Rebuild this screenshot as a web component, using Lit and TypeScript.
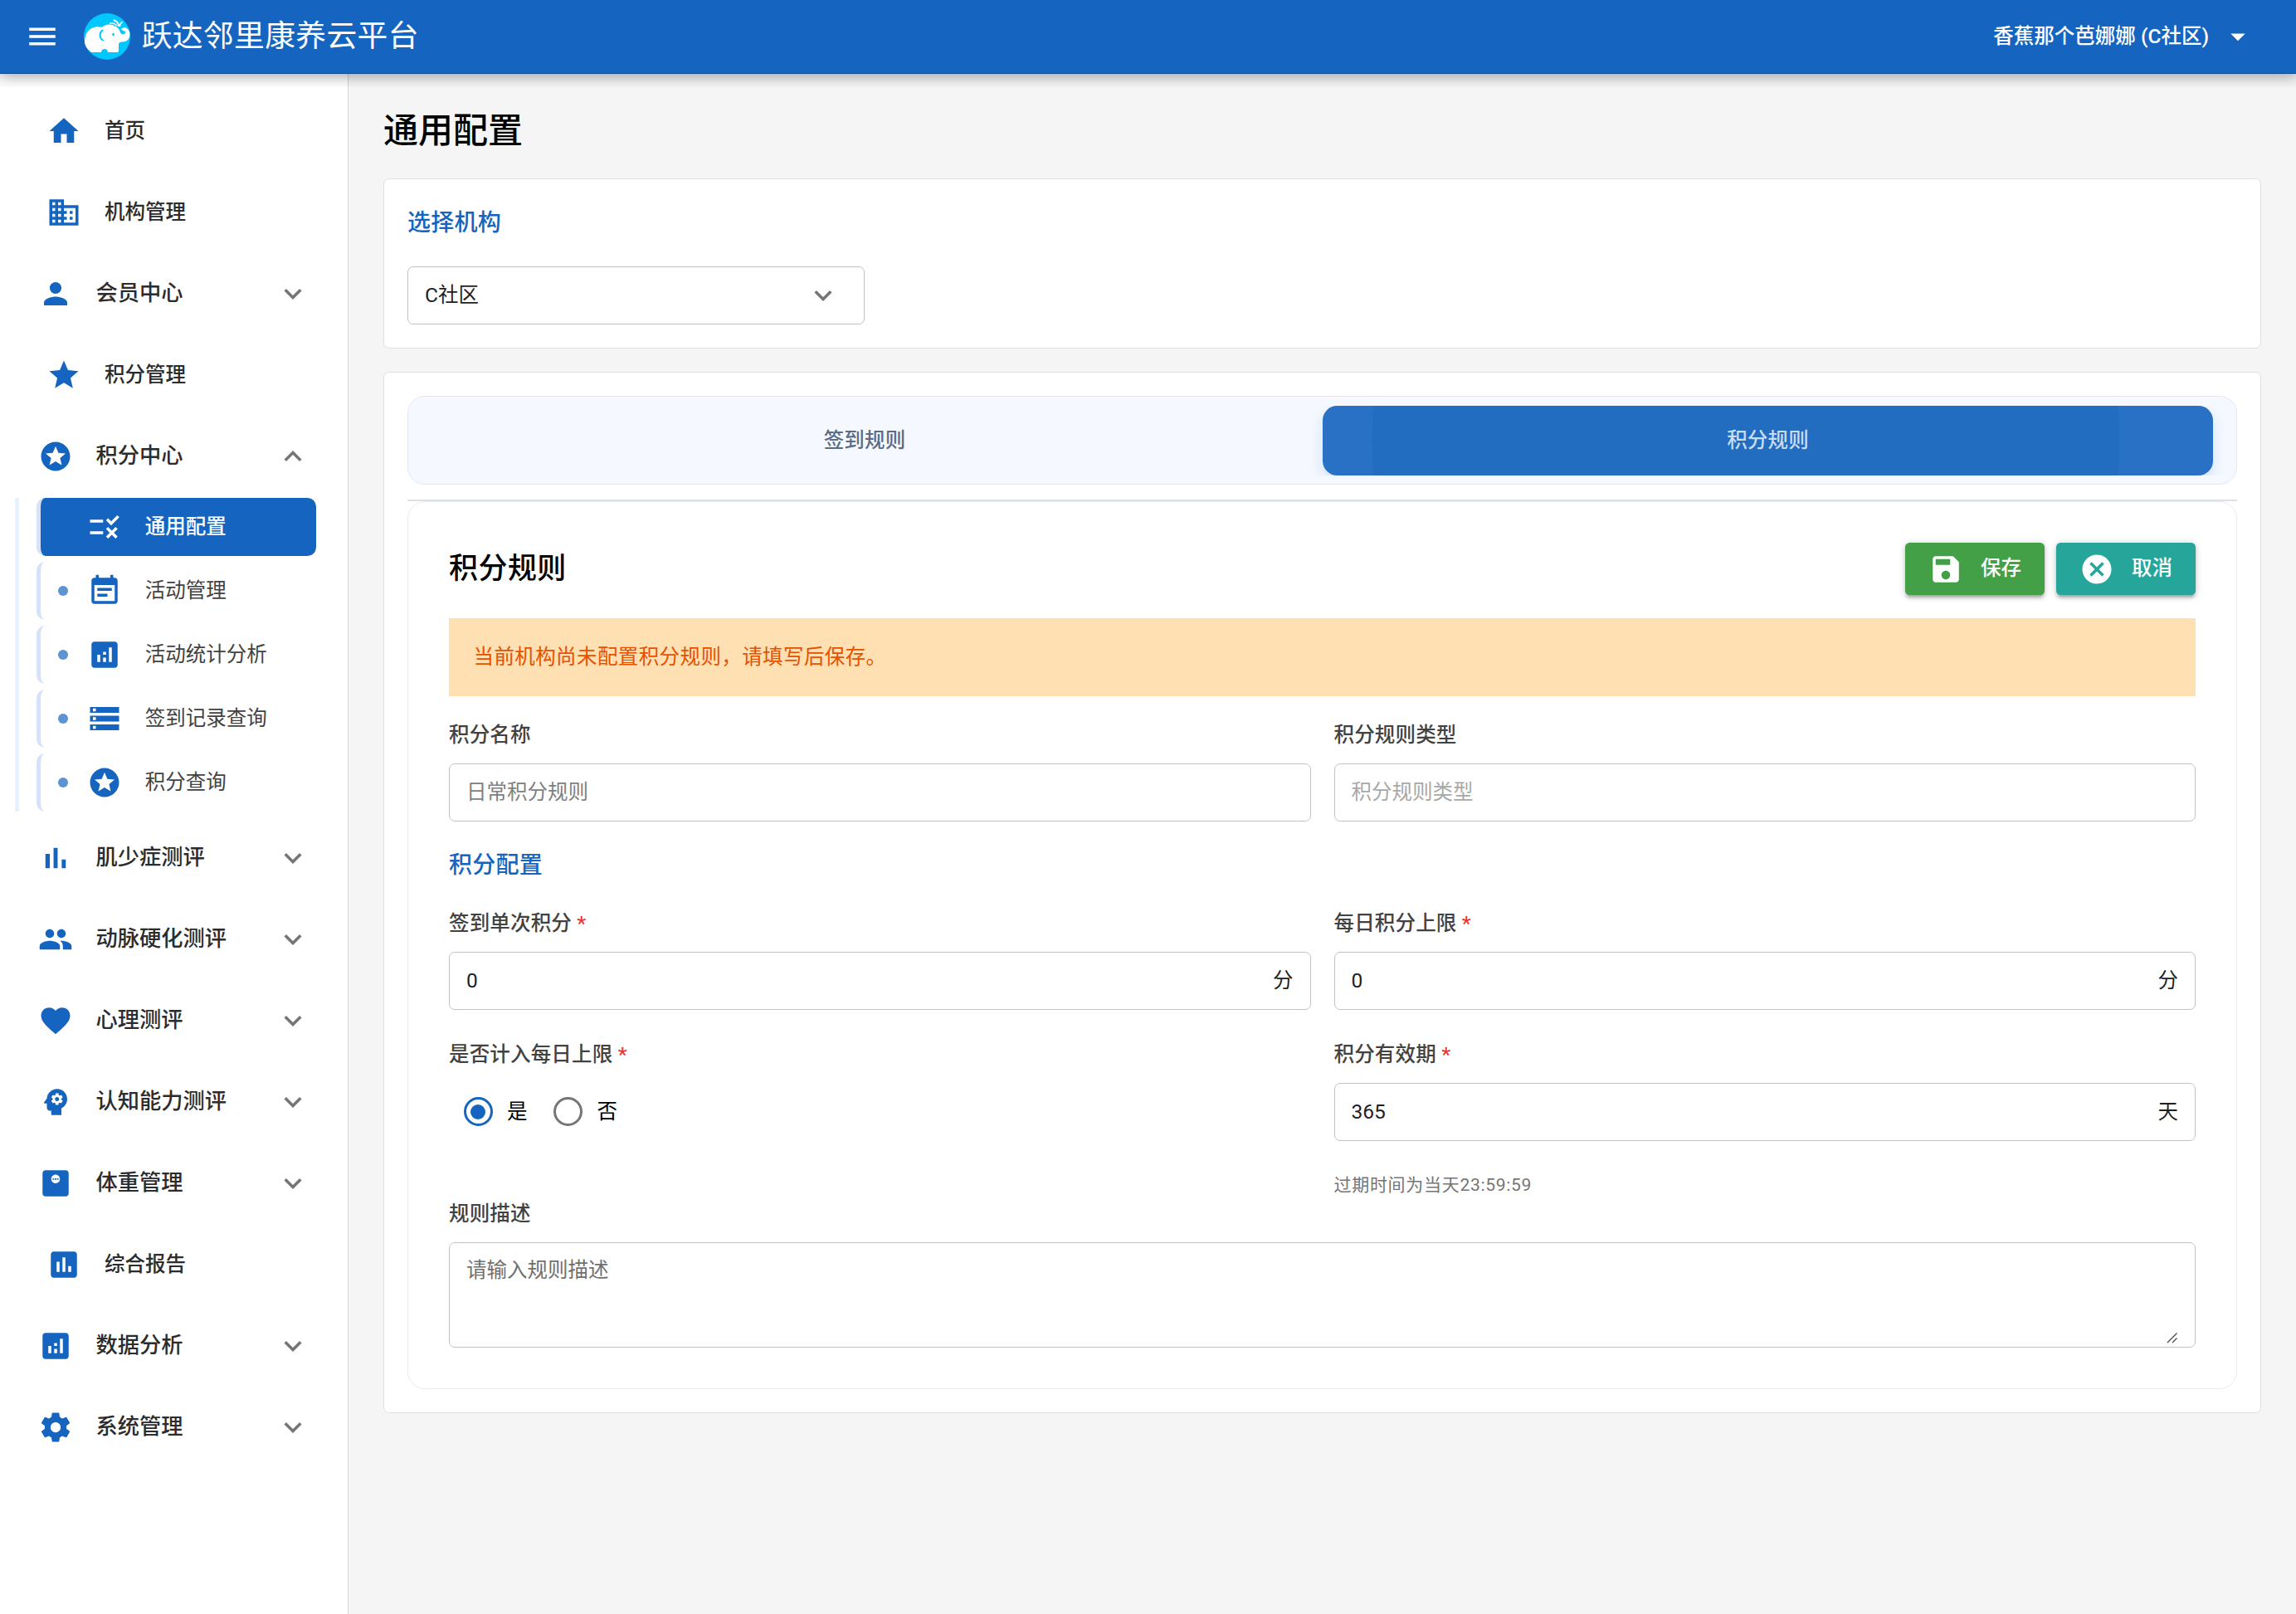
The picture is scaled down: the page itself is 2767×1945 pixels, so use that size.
import { LitElement, html, css, svg, nothing } from "lit";
import { customElement, property } from "lit/decorators.js";
import { classMap } from "lit/directives/class-map.js";

const ICONS: Record<string, string> = {
  menu: "M3 18h18v-2H3v2zm0-5h18v-2H3v2zm0-7v2h18V6H3z",
  home: "M10 20v-6h4v6h5v-8h3L12 3 2 12h3v8z",
  domain:
    "M12 7V3H2v18h20V7H12zM6 19H4v-2h2v2zm0-4H4v-2h2v2zm0-4H4V9h2v2zm0-4H4V5h2v2zm4 12H8v-2h2v2zm0-4H8v-2h2v2zm0-4H8V9h2v2zm0-4H8V5h2v2zm10 12h-8v-2h2v-2h-2v-2h2v-2h-2V9h8v10zm-2-8h-2v2h2v-2zm0 4h-2v2h2v-2z",
  person:
    "M12 12c2.21 0 4-1.79 4-4s-1.79-4-4-4-4 1.79-4 4 1.79 4 4 4zm0 2c-2.67 0-8 1.34-8 4v2h16v-2c0-2.66-5.33-4-8-4z",
  star: "M12 17.27L18.18 21l-1.64-7.03L22 9.24l-7.19-.61L12 2 9.19 8.63 2 9.24l5.46 4.73L5.82 21z",
  stars:
    "M11.99 2C6.47 2 2 6.48 2 12s4.47 10 9.99 10C17.52 22 22 17.52 22 12S17.52 2 11.99 2zm4.24 16L12 15.45 7.77 18l1.12-4.81-3.73-3.23 4.92-.42L12 5l1.92 4.53 4.92.42-3.73 3.23L16.23 18z",
  rule: "M16.54 11L13 7.46l1.41-1.41 2.12 2.12 4.24-4.24 1.41 1.41L16.54 11zM11 7H2v2h9V7zm10 6.41L19.59 12 17 14.59 14.41 12 13 13.41 15.59 16 13 18.59 14.41 20 17 17.41 19.59 20 21 18.59 18.41 16 21 13.41zM11 15H2v2h9v-2z",
  eventNote:
    "M17 10H7v2h10v-2zm2-7h-1V1h-2v2H8V1H6v2H5c-1.11 0-1.99.9-1.99 2L3 19c0 1.1.89 2 2 2h14c1.1 0 2-.9 2-2V5c0-1.1-.9-2-2-2zm0 16H5V8h14v11zm-5-5H7v2h7v-2z",
  analytics:
    "M19 3H5c-1.1 0-2 .9-2 2v14c0 1.1.9 2 2 2h14c1.1 0 2-.9 2-2V5c0-1.1-.9-2-2-2zM9 17H7v-5h2v5zm4 0h-2v-3h2v3zm0-5h-2v-2h2v2zm4 5h-2V7h2v10z",
  storage:
    "M2 20h20v-4H2v4zm2-3h2v2H4v-2zM2 4v4h20V4H2zm4 3H4V5h2v2zm-4 7h20v-4H2v4zm2-3h2v2H4v-2z",
  barChart: "M5 9.2h3V19H5zM10.6 5h2.8v14h-2.8zm5.6 8H19v6h-2.8z",
  people:
    "M16 11c1.66 0 2.99-1.34 2.99-3S17.66 5 16 5c-1.66 0-3 1.34-3 3s1.34 3 3 3zm-8 0c1.66 0 2.99-1.34 2.99-3S9.66 5 8 5C6.34 5 5 6.34 5 8s1.34 3 3 3zm0 2c-2.33 0-7 1.17-7 3.5V19h14v-2.5c0-2.33-4.67-3.5-7-3.5zm8 0c-.29 0-.62.02-.97.05 1.16.84 1.97 1.97 1.97 3.45V19h6v-2.5c0-2.33-4.67-3.5-7-3.5z",
  favorite:
    "M12 21.35l-1.45-1.32C5.4 15.36 2 12.28 2 8.5 2 5.42 4.42 3 7.5 3c1.74 0 3.41.81 4.5 2.09C13.09 3.81 14.76 3 16.5 3 19.58 3 22 5.42 22 8.5c0 3.78-3.4 6.86-8.55 11.54L12 21.35z",
  psychology:
    "M13 8.57c-.79 0-1.43.64-1.43 1.43s.64 1.43 1.43 1.43 1.43-.64 1.43-1.43-.64-1.43-1.43-1.43zM13 3C9.25 3 6.2 5.94 6.02 9.64L4.1 12.2c-.25.33-.01.8.4.8H6v3c0 1.1.9 2 2 2h1v3h7v-4.68c2.36-1.12 4-3.53 4-6.32 0-3.87-3.13-7-7-7zm3 7c0 .13-.01.26-.02.39l.83.66c.08.06.1.16.05.25l-.8 1.39c-.05.09-.16.12-.24.09l-.99-.4c-.21.16-.43.29-.67.39L14 13.83c-.01.1-.1.17-.2.17h-1.6c-.1 0-.18-.07-.2-.17l-.15-1.06c-.25-.1-.47-.23-.68-.39l-.99.4c-.09.03-.2 0-.25-.09l-.8-1.39c-.05-.08-.03-.19.05-.25l.84-.66c-.01-.13-.02-.26-.02-.39s.02-.27.04-.39l-.85-.66c-.08-.06-.1-.16-.05-.26l.8-1.38c.05-.09.15-.12.24-.09l1 .4c.2-.15.43-.29.67-.39L12 6.17c.02-.1.1-.17.2-.17h1.6c.1 0 .18.07.2.17l.15 1.06c.24.1.46.23.67.39l1-.4c.09-.03.2 0 .24.09l.8 1.38c.05.09.03.2-.05.26l-.85.66c.03.12.04.25.04.39z",
  weight:
    "M19 3H5c-1.1 0-2 .9-2 2v14c0 1.1.9 2 2 2h14c1.1 0 2-.9 2-2V5c0-1.1-.9-2-2-2zm-7 9c-1.66 0-3-1.34-3-3s1.34-3 3-3 3 1.34 3 3-1.34 3-3 3zM10 8.5h1v1h-1zM11.5 8.5h1v1h-1zM13 8.5h1v1h-1z",
  assessment:
    "M19 3H5c-1.1 0-2 .9-2 2v14c0 1.1.9 2 2 2h14c1.1 0 2-.9 2-2V5c0-1.1-.9-2-2-2zM9 17H7v-7h2v7zm4 0h-2V7h2v10zm4 0h-2v-4h2v4z",
  settings:
    "M19.43 12.98c.04-.32.07-.64.07-.98s-.03-.66-.07-.98l2.11-1.65c.19-.15.24-.42.12-.64l-2-3.46c-.12-.22-.39-.3-.61-.22l-2.49 1c-.52-.4-1.08-.73-1.69-.98l-.38-2.65C14.46 2.18 14.25 2 14 2h-4c-.25 0-.46.18-.49.42l-.38 2.65c-.61.25-1.17.59-1.69.98l-2.49-1c-.23-.09-.49 0-.61.22l-2 3.46c-.13.22-.07.49.12.64l2.11 1.65c-.04.32-.07.65-.07.98s.03.66.07.98l-2.11 1.65c-.19.15-.24.42-.12.64l2 3.46c.12.22.39.3.61.22l2.49-1c.52.4 1.08.73 1.69.98l.38 2.65c.03.24.24.42.49.42h4c.25 0 .46-.18.49-.42l.38-2.65c.61-.25 1.17-.59 1.69-.98l2.49 1c.23.09.49 0 .61-.22l2-3.46c.12-.22.07-.49-.12-.64l-2.11-1.65zM12 15.5c-1.93 0-3.5-1.57-3.5-3.5s1.57-3.5 3.5-3.5 3.5 1.57 3.5 3.5-1.57 3.5-3.5 3.5z",
  down: "M7.41 8.59L12 13.17l4.59-4.58L18 10l-6 6-6-6 1.41-1.41z",
  up: "M7.41 15.41L12 10.83l4.59 4.58L18 14l-6-6-6 6z",
  caret: "M7 10l5 5 5-5z",
  save: "M17 3H5c-1.11 0-2 .9-2 2v14c0 1.1.89 2 2 2h14c1.1 0 2-.9 2-2V7l-4-4zm-5 16c-1.66 0-3-1.34-3-3s1.34-3 3-3 3 1.34 3 3-1.34 3-3 3zm3-10H5V5h10v4z",
  cancel:
    "M12 2C6.47 2 2 6.47 2 12s4.47 10 10 10 10-4.47 10-10S17.53 2 12 2zm5 13.59L15.59 17 12 13.41 8.41 17 7 15.59 10.59 12 7 8.41 8.41 7 12 10.59 15.59 7 17 8.41 13.41 12 17 15.59z",
};

@customElement("md-icon")
class MdIcon extends LitElement {
  @property() name = "";

  static styles = css`
    :host {
      display: block;
      width: 42px;
      height: 42px;
      flex: none;
    }
    .glyph {
      display: block;
      width: 100%;
      height: 100%;
      fill: currentColor;
    }
  `;

  render() {
    return html`<svg class="glyph" viewBox="0 0 24 24">${svg`<path fill-rule="evenodd" d=${ICONS[this.name] ?? ""}></path>`}</svg>`;
  }
}

@customElement("app-logo")
class AppLogo extends LitElement {
  static styles = css`
    :host {
      display: block;
      width: 56px;
      height: 56px;
      flex: none;
    }
    .mark {
      display: block;
    }
  `;

  render() {
    return html`
      <svg class="mark" width="56" height="56" viewBox="0 0 56 56">
        <circle cx="28" cy="28" r="28" fill="#00c8ff" />
        <path
          fill="#fff"
          d="M1 35C1 25 6 17.500 14 16.500C18 16 20 17 22.500 16.500C27 13 31 13 36 14.500C40 16 43 19 44 23C45 26 50 26 50 23C50 21 47.500 21.500 45 19.500C46.500 16 53 16.500 55 22C57 29 53 35 46 34.500C42.500 34.500 42 36 42 39V45Q42 47 39 47H29C29 41.500 21 41.500 21 47H9C5 44 1.500 40 1 35Z"
        />
        <path fill="none" stroke="#00c8ff" stroke-width="2" stroke-linecap="round" d="M22.500 20.500C18.500 23 18.500 30 23 32.500" />
        <circle cx="35.500" cy="25.500" r="1.500" fill="#00c8ff" />
        <g fill="none" stroke="#fff" stroke-linecap="round">
          <path stroke-width="2" d="M42 15C41.500 12 39.500 9.500 36.500 8.500" />
          <path stroke-width="1.500" d="M39.500 14.500C37.500 12.500 34.500 11.500 31.500 12" />
          <path stroke-width="1.800" d="M43.500 15C43.500 13 44.500 11.500 46 11" />
        </g>
      </svg>
    `;
  }
}

interface NavItem {
  icon: string;
  label: string;
  group?: boolean;
  open?: boolean;
  children?: { icon: string; label: string; active?: boolean }[];
}

const NAV: NavItem[] = [
  { icon: "home", label: "首页" },
  { icon: "domain", label: "机构管理" },
  { icon: "person", label: "会员中心", group: true },
  { icon: "star", label: "积分管理" },
  {
    icon: "stars",
    label: "积分中心",
    group: true,
    open: true,
    children: [
      { icon: "rule", label: "通用配置", active: true },
      { icon: "eventNote", label: "活动管理" },
      { icon: "analytics", label: "活动统计分析" },
      { icon: "storage", label: "签到记录查询" },
      { icon: "stars", label: "积分查询" },
    ],
  },
  { icon: "barChart", label: "肌少症测评", group: true },
  { icon: "people", label: "动脉硬化测评", group: true },
  { icon: "favorite", label: "心理测评", group: true },
  { icon: "psychology", label: "认知能力测评", group: true },
  { icon: "weight", label: "体重管理", group: true },
  { icon: "assessment", label: "综合报告" },
  { icon: "analytics", label: "数据分析", group: true },
  { icon: "settings", label: "系统管理", group: true },
];

@customElement("side-nav")
class SideNav extends LitElement {
  static styles = css`
    :host {
      display: block;
      box-sizing: border-box;
      width: 420px;
      flex: none;
      padding-top: 20px;
      background: #fff;
      border-right: 1px solid #d6d6d6;
    }
    .item {
      display: flex;
      align-items: center;
      box-sizing: border-box;
      height: 98px;
      padding: 0 45px 0 56px;
      color: #1565c0;
    }
    .item.group {
      padding-left: 45.5px;
    }
    .label {
      flex: 1;
      margin-left: 28px;
      color: #2c2c2c;
      font-size: 24.5px;
      font-weight: 500;
      line-height: 42px;
    }
    .group .label {
      padding-bottom: 2px;
      font-size: 26.25px;
    }
    .chevron {
      color: #757575;
    }
    .children {
      display: flex;
      flex-direction: column;
      gap: 7px;
      margin: 0.5px 0 7px 18px;
      padding-left: 20.5px;
      border-left: 5px solid #e8f0fe;
    }
    .child {
      display: flex;
      align-items: center;
      box-sizing: border-box;
      width: 337px;
      height: 70px;
      padding-left: 21px;
      border-left: 5px solid #d6e2f9;
      border-radius: 10.5px;
      color: #1565c0;
    }
    .dot {
      width: 12px;
      height: 12px;
      border-radius: 50%;
      background: #5b93d3;
    }
    .child-icon {
      margin-left: 23.25px;
    }
    .child-label {
      margin-left: 28px;
      color: #424242;
      font-size: 24.5px;
      line-height: 42px;
    }
    .child.active {
      background: #1565c0;
      color: #fff;
    }
    .active .dot {
      background: none;
    }
    .active .child-label {
      color: #fff;
      font-weight: 500;
    }
  `;

  render() {
    return NAV.map(
      (n) => html`
        <div class=${classMap({ item: true, group: !!n.group })}>
          <md-icon name=${n.icon}></md-icon>
          <span class="label">${n.label}</span>
          ${n.group ? html`<md-icon class="chevron" name=${n.open ? "up" : "down"}></md-icon>` : nothing}
        </div>
        ${n.children
          ? html`<div class="children">
              ${n.children.map(
                (c) => html`
                  <div class=${classMap({ child: true, active: !!c.active })}>
                    <span class="dot"></span>
                    <md-icon class="child-icon" name=${c.icon}></md-icon>
                    <span class="child-label">${c.label}</span>
                  </div>
                `
              )}
            </div>`
          : nothing}
      `
    );
  }
}

@customElement("form-field")
class FormField extends LitElement {
  @property() label = "";
  @property({ type: Boolean }) required = false;
  @property() value = "";
  @property() placeholder = "";
  @property() suffix = "";
  @property() hint = "";
  @property({ type: Boolean }) disabled = false;
  @property({ type: Boolean }) multiline = false;
  @property({ type: Boolean }) bare = false;

  static styles = css`
    :host {
      display: block;
      min-width: 0;
    }
    .label {
      height: 42px;
      margin-bottom: 13px;
      color: #424242;
      font-size: 24.5px;
      font-weight: 500;
      letter-spacing: 0.175px;
      line-height: 42px;
    }
    .required {
      color: #e53935;
    }
    .control {
      display: flex;
      align-items: center;
      justify-content: space-between;
      box-sizing: border-box;
      height: 70px;
      padding: 0 20px;
      border: 1px solid #c2c2c2;
      border-radius: 7px;
      background: #fff;
      color: #1f1f1f;
      font-size: 24.5px;
      line-height: 42px;
    }
    .placeholder {
      color: #808080;
    }
    .disabled .placeholder {
      color: #a8a8a8;
    }
    .multiline {
      position: relative;
      align-items: flex-start;
      height: 127.5px;
      padding-top: 12px;
    }
    .multiline .placeholder {
      color: #6f6f6f;
    }
    .grip {
      position: absolute;
      right: 21px;
      bottom: 4px;
      width: 14px;
      height: 14px;
    }
    .hint {
      height: 28px;
      margin-top: 38.5px;
      color: #757575;
      font-size: 21px;
      letter-spacing: 0.7px;
      line-height: 28px;
    }
  `;

  render() {
    return html`
      <div class="label">${this.label}${this.required ? html` <span class="required">*</span>` : nothing}</div>
      ${this.bare
        ? html`<slot></slot>`
        : html`<div class=${classMap({ control: true, multiline: this.multiline, disabled: this.disabled })}>
            ${this.value
              ? html`<span>${this.value}</span>`
              : html`<span class="placeholder">${this.placeholder}</span>`}
            ${this.suffix ? html`<span>${this.suffix}</span>` : nothing}
            ${this.multiline
              ? html`<svg class="grip" viewBox="0 0 14 14">
                  <path d="M2 13L13.500 1.500M8 13L13.500 7.500" stroke="#4d4d4d" stroke-width="1.400" />
                </svg>`
              : nothing}
          </div>`}
      ${this.hint ? html`<div class="hint">${this.hint}</div>` : nothing}
    `;
  }
}

@customElement("app-root")
class AppRoot extends LitElement {
  static styles = css`
    :host {
      display: flex;
      flex-direction: column;
      min-height: 100vh;
      background: #f5f5f5;
      color: #000;
      font-family: Roboto, "Noto Sans CJK SC", sans-serif;
      font-size: 24.5px;
    }
    .header {
      position: relative;
      display: flex;
      align-items: center;
      box-sizing: border-box;
      height: 89px;
      padding: 0 49px 0 29.75px;
      border-bottom: 1px solid #124a8c;
      background: #1565c0;
      color: #fff;
      z-index: 1;
    }
    .shadow-clip {
      position: absolute;
      inset: 0 0 -17px 0;
      overflow: hidden;
      pointer-events: none;
      z-index: -1;
    }
    .shadow {
      height: 89px;
      box-shadow: 0 0 17.5px 3.5px rgba(0, 0, 0, 0.2), 0 0 17.5px rgba(0, 0, 0, 0.24);
    }
    .logo {
      margin-left: 29px;
    }
    .brand {
      flex: 1;
      margin-left: 14px;
      font-size: 36.75px;
      letter-spacing: 0.37px;
      line-height: 56px;
    }
    .user {
      margin-right: 14px;
      font-weight: 500;
      line-height: 42px;
    }
    .body {
      display: flex;
      flex: 1;
    }
    .main {
      flex: 1;
      min-width: 0;
      padding: 34px 42px;
    }
    .title {
      height: 70px;
      margin: 0 0 22px;
      font-size: 42px;
      font-weight: 500;
      line-height: 70px;
    }
    .card {
      box-sizing: border-box;
      margin-bottom: 28px;
      padding: 28px;
      border: 1px solid #e0e0e0;
      border-radius: 7px;
      background: #fff;
    }
    .picker {
      height: 205px;
      padding-top: 25px;
    }
    .subtitle {
      height: 56px;
      color: #1565c0;
      font-size: 28px;
      font-weight: 500;
      letter-spacing: 0.26px;
      line-height: 56px;
    }
    .select {
      display: flex;
      align-items: center;
      justify-content: space-between;
      box-sizing: border-box;
      width: 551px;
      height: 70px;
      margin-top: 24px;
      padding: 0 28px 0 20px;
      border: 1px solid #c2c2c2;
      border-radius: 7px;
      color: #1f1f1f;
      line-height: 42px;
    }
    .select md-icon {
      color: #757575;
    }
    .tabs {
      display: grid;
      grid-template-columns: 1fr 1fr;
      gap: 15.5px;
      box-sizing: border-box;
      height: 107px;
      padding: 11px 28px 10px 13.5px;
      border: 1px solid #e1e8f5;
      border-radius: 21px;
      background: #f5f9ff;
    }
    .tab {
      height: 84px;
      border-radius: 17.5px;
      color: #5b6b85;
      font-weight: 500;
      letter-spacing: 0.175px;
      line-height: 84px;
      text-align: center;
    }
    .tab.active {
      background: radial-gradient(circle 451px at 510px 50%, #226dc0 99.7%, #2971c4 100%);
      color: #c8dcf3;
      box-shadow: 0 7px 17.5px rgba(21, 101, 192, 0.16);
      clip-path: inset(0 -28px);
    }
    .rule-line {
      height: 2px;
      margin-top: 18px;
      background: #e0e0e0;
    }
    .panel {
      padding: 49px;
      border: 1px solid #e6ebf8;
      border-radius: 21px;
    }
    .panel-head {
      display: flex;
      align-items: center;
      gap: 14px;
      height: 63px;
    }
    .panel-title {
      flex: 1;
      font-size: 35px;
      font-weight: 500;
      letter-spacing: 0.44px;
      line-height: 56px;
    }
    .btn {
      display: flex;
      align-items: center;
      gap: 21px;
      box-sizing: border-box;
      height: 63px;
      padding: 0 28px;
      border-radius: 5.25px;
      color: #fff;
      font-weight: 500;
      line-height: 42px;
      box-shadow: 0 1.75px 8.75px rgba(0, 0, 0, 0.2), 0 3.5px 3.5px rgba(0, 0, 0, 0.14),
        0 5.25px 1.75px -3.5px rgba(0, 0, 0, 0.12);
    }
    .btn span {
      padding-bottom: 2px;
    }
    .save {
      background: #43a047;
    }
    .cancel {
      background: #26a69a;
    }
    .banner {
      height: 94px;
      margin-top: 28px;
      padding: 0 29.5px;
      background: #ffe0b2;
      color: #e65100;
      letter-spacing: 0.4px;
      line-height: 94px;
    }
    .row {
      display: grid;
      grid-template-columns: 1fr 1fr;
      column-gap: 28px;
    }
    .row.first {
      margin-top: 26px;
    }
    .section {
      margin: 25px 0 21px;
    }
    .row.later {
      margin-top: 33px;
    }
    .radios {
      display: flex;
      gap: 14px;
      height: 69px;
    }
    .radio {
      display: flex;
      align-items: center;
      line-height: 42px;
    }
    .ring {
      display: flex;
      align-items: center;
      justify-content: center;
      box-sizing: border-box;
      width: 35px;
      height: 35px;
      margin: 0 17.5px;
      border: 3px solid #757575;
      border-radius: 50%;
    }
    .ring.checked {
      border-color: #1565c0;
    }
    .ring.checked::before {
      content: "";
      width: 18px;
      height: 18px;
      border-radius: 50%;
      background: #1565c0;
    }
  `;

  render() {
    return html`
      <header class="header">
        <div class="shadow-clip"><div class="shadow"></div></div>
        <md-icon name="menu"></md-icon>
        <app-logo class="logo"></app-logo>
        <span class="brand">跃达邻里康养云平台</span>
        <span class="user">香蕉那个芭娜娜 (C社区)</span>
        <md-icon name="caret"></md-icon>
      </header>
      <div class="body">
        <side-nav></side-nav>
        <main class="main">
          <h1 class="title">通用配置</h1>
          <section class="card picker">
            <div class="subtitle">选择机构</div>
            <div class="select"><span>C社区</span><md-icon name="down"></md-icon></div>
          </section>
          <section class="card">
            <div class="tabs">
              <div class="tab">签到规则</div>
              <div class="tab active">积分规则</div>
            </div>
            <div class="rule-line"></div>
            <div class="panel">
              <div class="panel-head">
                <span class="panel-title">积分规则</span>
                <div class="btn save"><md-icon name="save"></md-icon><span>保存</span></div>
                <div class="btn cancel"><md-icon name="cancel"></md-icon><span>取消</span></div>
              </div>
              <div class="banner">当前机构尚未配置积分规则，请填写后保存。</div>
              <div class="row first">
                <form-field label="积分名称" placeholder="日常积分规则"></form-field>
                <form-field label="积分规则类型" placeholder="积分规则类型" disabled></form-field>
              </div>
              <div class="subtitle section">积分配置</div>
              <div class="row">
                <form-field label="签到单次积分" required value="0" suffix="分"></form-field>
                <form-field label="每日积分上限" required value="0" suffix="分"></form-field>
              </div>
              <div class="row later">
                <form-field label="是否计入每日上限" required bare>
                  <div class="radios">
                    <div class="radio"><span class="ring checked"></span><span>是</span></div>
                    <div class="radio"><span class="ring"></span><span>否</span></div>
                  </div>
                </form-field>
                <form-field
                  label="积分有效期"
                  required
                  value="365"
                  suffix="天"
                  hint="过期时间为当天23:59:59"
                ></form-field>
              </div>
              <form-field label="规则描述" placeholder="请输入规则描述" multiline></form-field>
            </div>
          </section>
        </main>
      </div>
    `;
  }
}
